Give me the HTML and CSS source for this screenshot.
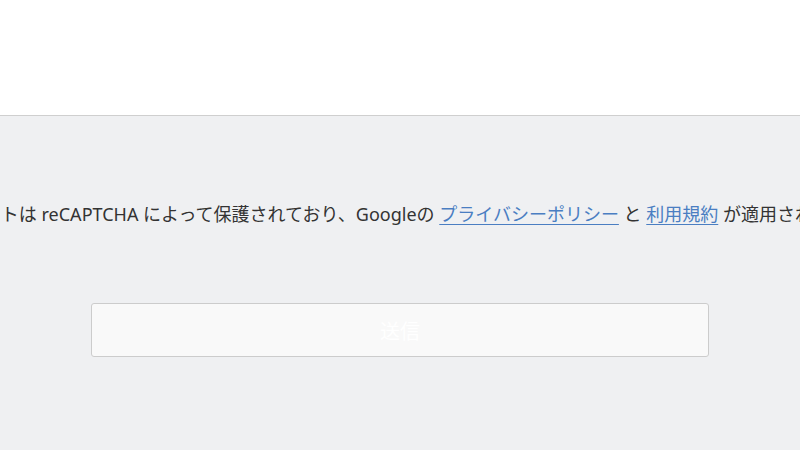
FILE: index.html
```html
<!DOCTYPE html>
<html lang="ja">
<head>
<meta charset="utf-8">
<link rel="stylesheet" href="styles.css">
</head>
<body>
<header class="top"></header>
<main class="panel">
  <div class="notice">
    <p class="notice-text">このサイトは reCAPTCHA によって保護されており、Googleの <a href="#">プライバシーポリシー</a> と <a href="#">利用規約</a> が適用されます。</p>
  </div>
  <div class="actions">
    <button class="submit" type="button">送信</button>
  </div>
</main>
</body>
</html>
```
FILE: styles.css
```css
html, body {
  margin: 0;
  padding: 0;
  height: 100%;
  overflow: hidden;
}
body {
  font-family: "Noto Sans", "Noto Sans CJK JP", sans-serif;
  background: #eff0f2;
  color: #333;
}
.top {
  height: 115px;
  background: #fff;
  border-bottom: 1px solid #cfcfcf;
}
.panel {
  padding-top: 80px;
}
.notice {
  display: flex;
  justify-content: center;
  height: 36px;
  align-items: center;
  padding-right: 6px;
}
.notice-text {
  margin: 0;
  white-space: nowrap;
  font-size: 18px;
  line-height: 36px;
  flex-shrink: 0;
}
.notice-text a {
  color: #4a7ec2;
  text-decoration: underline;
  text-underline-offset: 3px;
}
.actions {
  padding: 71px 91px 0;
}
.submit {
  display: block;
  width: 100%;
  height: 54px;
  background: #f9f9f9;
  border: 1px solid #cccccc;
  border-radius: 3px;
  color: #ffffff;
  font-family: "Noto Sans CJK JP", sans-serif;
  font-size: 20px;
}
```
